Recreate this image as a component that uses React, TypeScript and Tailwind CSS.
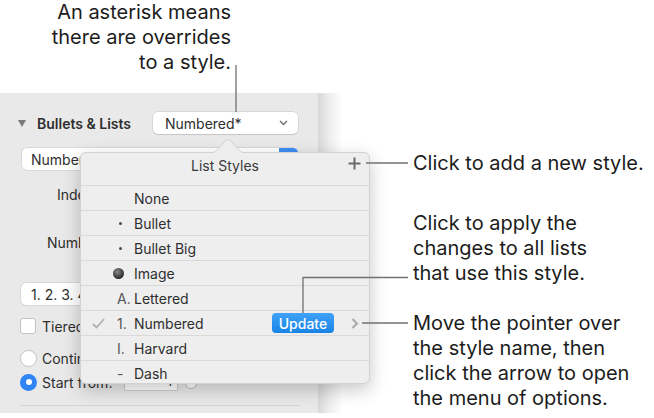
import React from 'react';

type Row = { mark: string; name: string; current?: boolean };

const rows: Row[] = [
  { mark: '', name: 'None' },
  { mark: 'dot', name: 'Bullet' },
  { mark: 'dot', name: 'Bullet Big' },
  { mark: 'image', name: 'Image' },
  { mark: 'A.', name: 'Lettered' },
  { mark: '1.', name: 'Numbered', current: true },
  { mark: 'I.', name: 'Harvard' },
  { mark: '-', name: 'Dash' },
];

const Marker = ({ mark }: { mark: string }) => {
  if (mark === 'dot') return <span className="ml-[2px] block h-[3px] w-[3px] rounded-full bg-[#4a4a4a]" />;
  if (mark === 'image')
    return (
      <span className="-ml-[4px] block h-[11px] w-[11px] rounded-full bg-[radial-gradient(circle_at_40%_35%,#8a8a8a,#2a2a2a_70%)]" />
    );
  return <span className="text-[#555]">{mark}</span>;
};

const ListStylesPopover = () => (
  <div className="absolute left-[80px] top-[152px] h-[232px] w-[290px] rounded-[6px] border border-[#d2d2d2] bg-[#eeeeee] shadow-[0_6px_18px_rgba(0,0,0,0.22)]">
    <svg className="absolute -top-[14px] left-[128px]" width="38" height="15" viewBox="0 0 38 15" aria-hidden>
      <path d="M0 14.5 C 10 14.5, 14 0.5, 19 0.5 C 24 0.5, 28 14.5, 38 14.5 Z" fill="#eeeeee" stroke="#d2d2d2" />
      <rect x="0" y="14" width="38" height="1" fill="#eeeeee" />
    </svg>
    <div className="relative flex h-[32px] justify-center pt-[4px] text-[14px] leading-[17px] text-[#3a3a3a]">
      List Styles
      <svg className="absolute right-[8px] top-[4px]" width="13" height="13" viewBox="0 0 13 13" aria-hidden>
        <path d="M6.5 0.5 V12.5 M0.5 6.5 H12.5" stroke="#6a6a6a" strokeWidth="2" />
      </svg>
    </div>
    {rows.map((r) => (
      <div key={r.name} className="relative flex h-[25px] items-center border-t border-[#d9d9d9] text-[14px] text-[#2e2e2e]">
        <span className="flex w-[36px] justify-end pr-[12px]">
          {r.current && (
            <svg width="13" height="11" viewBox="0 0 13 11" aria-hidden>
              <path d="M1 6 L4.5 9.5 L12 1" fill="none" stroke="#b2b2b2" strokeWidth="1.8" />
            </svg>
          )}
        </span>
        <span className="flex w-[17px] items-center">
          <Marker mark={r.mark} />
        </span>
        <span>{r.name}</span>
        {r.current && (
          <>
            <span className="absolute left-[191px] top-[2px] flex h-[20px] w-[62px] items-center justify-center rounded-[4px] bg-linear-to-b from-[#3fa2f7] to-[#1584e6] text-[14px] font-medium text-white">
              Update
            </span>
            <svg className="absolute left-[270px] top-[7px]" width="8" height="11" viewBox="0 0 8 11" aria-hidden>
              <path d="M1.5 1 L6 5.5 L1.5 10" fill="none" stroke="#a9a9a9" strokeWidth="2" />
            </svg>
          </>
        )}
      </div>
    ))}
  </div>
);

const Sidebar = () => (
  <div className="flex">
    <div className="h-[320px] w-[318px] bg-[#e9e9e9] text-[14px] text-[#2e2e2e]">
      <div className="mt-[19px] flex h-[22px] items-center pl-[18px]">
        <svg width="8" height="7" viewBox="0 0 8 7" aria-hidden>
          <path d="M0 0 H8 L4 7 Z" fill="#7a7a7a" />
        </svg>
        <span className="w-[108px] pl-[11px] font-semibold">Bullets &amp; Lists</span>
        <div className="ml-[19px] flex h-[22px] w-[145px] items-center justify-between rounded-[5px] bg-white pl-[12px] pr-[10px] shadow-[0_0_0_0.5px_rgba(0,0,0,0.15),0_1px_1px_rgba(0,0,0,0.08)]">
          <span>Numbered*</span>
          <svg width="9" height="6" viewBox="0 0 9 6" aria-hidden>
            <path d="M1 1 L4.5 4.5 L8 1" fill="none" stroke="#6a6a6a" strokeWidth="1.3" />
          </svg>
        </div>
      </div>
      <div className="ml-[22px] mt-[14px] flex h-[22px] w-[276px] items-center rounded-[5px] bg-white shadow-[0_0_0_0.5px_rgba(0,0,0,0.15)]">
        <span className="flex-1 pl-[9px]">Numbered</span>
        <span className="h-[22px] w-[19px] rounded-r-[5px] bg-[#3f8ef6]" />
      </div>
      <div className="ml-[57px] mt-[16px] h-[18px] leading-[18px]">Indent:</div>
      <div className="ml-[47px] mt-[30px] h-[18px] leading-[18px]">Number:</div>
      <div className="ml-[21px] mt-[31px] flex h-[22px] w-[200px] items-center rounded-[5px] bg-white pl-[10px] shadow-[0_0_0_0.5px_rgba(0,0,0,0.15)]">
        1. 2. 3. 4.
      </div>
      <div className="ml-[20px] mt-[13px] flex h-[16px] items-center gap-[6px]">
        <span className="h-[16px] w-[16px] rounded-[3px] border border-[#c4c4c4] bg-white" />
        <span>Tiered</span>
      </div>
      <div className="ml-[20px] mt-[15px] flex h-[18px] items-center gap-[5px]">
        <span className="h-[17px] w-[17px] rounded-full border border-[#c4c4c4] bg-white" />
        <span>Continue</span>
      </div>
      <div className="ml-[20px] mt-[6px] flex h-[18px] items-center">
        <span className="flex h-[17px] w-[17px] items-center justify-center rounded-full bg-[#3184f6]">
          <span className="h-[6px] w-[6px] rounded-full bg-white" />
        </span>
        <span className="ml-[5px] w-[82px]">Start from:</span>
        <span className="flex h-[17px] w-[54px] items-center justify-end border border-[#cfcfcf] bg-white pr-[5px] text-[13px]">
          1
        </span>
        <span className="ml-[7px] h-[14px] w-[12px] rounded-full border border-[#bdbdbd] bg-white" />
      </div>
      <div className="ml-[20px] mt-[14px] h-px w-[280px] bg-[#d4d4d4]" />
    </div>
    <div className="h-[320px] w-[24px] bg-linear-to-r from-[#d8d8d8] via-[#eeeeee] to-white" />
  </div>
);

const Leaders = () => (
  <svg className="pointer-events-none absolute inset-0" width="654" height="418" aria-hidden>
    <g stroke="#707070" strokeWidth="1.3" fill="none">
      <path d="M236 65 V112" />
      <path d="M366 163 H408" />
      <path d="M303 313 V277.5 H408" />
      <path d="M362 323 H408" />
    </g>
  </svg>
);

export default function App() {
  return (
    <div className="relative h-[418px] w-[654px] overflow-hidden bg-white font-['Inter','Noto_Sans',sans-serif]">
      <div className="h-[93px] w-[231px] text-right text-[20px] leading-[25px] text-[#1c1c1c]">
        An asterisk means
        <br />
        there are overrides
        <br />
        to a style.
      </div>
      <Sidebar />
      <ListStylesPopover />
      <div className="absolute left-[413px] top-[151px] text-[20px] leading-[25px] text-[#1c1c1c]">
        Click to add a new style.
      </div>
      <div className="absolute left-[413px] top-[211px] text-[20px] leading-[25px] text-[#1c1c1c]">
        Click to apply the
        <br />
        changes to all lists
        <br />
        that use this style.
      </div>
      <div className="absolute left-[413px] top-[311px] text-[20px] leading-[25px] text-[#1c1c1c]">
        Move the pointer over
        <br />
        the style name, then
        <br />
        click the arrow to open
        <br />
        the menu of options.
      </div>
      <Leaders />
    </div>
  );
}
